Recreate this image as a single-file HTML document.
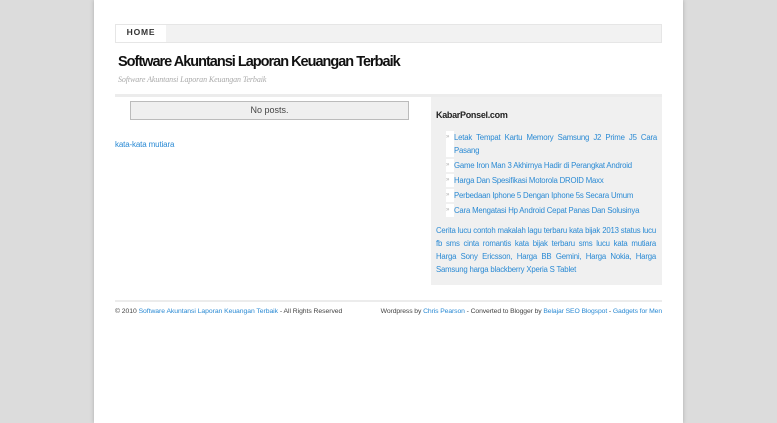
<!DOCTYPE html>
<html><head><style>
body{margin:0;background:#dcdcdc;font-family:"Liberation Sans",sans-serif;}
#page{position:absolute;left:94px;top:0;width:589px;height:423px;background:#fff;box-shadow:0 0 4px #aaa;}
a{color:#2a8ad4;text-decoration:none}
.abs{position:absolute}
.li{margin-bottom:2px;display:flex}
.li span{color:#aaa;background:#fff;width:8px;flex:none;font-size:6px}
</style></head><body>
<div id="page">
<div class="abs" style="left:21px;top:24px;width:545px;height:17px;background:#f2f2f2;border:1px solid #e6e6e6;"></div>
<div class="abs" style="left:22px;top:25px;width:50px;height:17px;background:#fff;font-size:8.5px;font-weight:bold;letter-spacing:.8px;color:#333;text-align:center;line-height:15px;">HOME</div>
<div class="abs" style="left:24px;top:54px;font-size:14.5px;font-weight:bold;letter-spacing:-1px;color:#111;">Software Akuntansi Laporan Keuangan Terbaik</div>
<div class="abs" style="left:24px;top:75px;font-family:'Liberation Serif',serif;font-style:italic;font-size:8px;letter-spacing:-.1px;color:#aaa;">Software Akuntansi Laporan Keuangan Terbaik</div>
<div class="abs" style="left:21px;top:94px;width:547px;height:3px;background:#ececec;"></div>
<div class="abs" style="left:337px;top:97px;width:231px;height:188px;background:#f0f0f0;"></div>
<div class="abs" style="left:36px;top:101px;width:277px;height:17px;background:#efefef;border:1px solid #bbb;font-size:9px;color:#444;text-align:center;line-height:17px;">No posts.</div>
<div class="abs" style="left:21px;top:140px;font-size:8px;letter-spacing:-.15px"><a>kata-kata mutiara</a></div>
<div class="abs" style="left:342px;top:110px;font-size:9px;font-weight:bold;letter-spacing:-.3px;color:#222;">KabarPonsel.com</div>
<div class="abs" style="left:352px;top:131px;width:211px;font-size:7.8px;letter-spacing:-.2px;line-height:13px;">
<div class="li"><span>»</span><a style="text-align:justify">Letak Tempat Kartu Memory Samsung J2 Prime J5 Cara Pasang</a></div>
<div class="li"><span>»</span><a>Game Iron Man 3 Akhirnya Hadir di Perangkat Android</a></div>
<div class="li"><span>»</span><a>Harga Dan Spesifikasi Motorola DROID Maxx</a></div>
<div class="li"><span>»</span><a>Perbedaan Iphone 5 Dengan Iphone 5s Secara Umum</a></div>
<div class="li"><span>»</span><a>Cara Mengatasi Hp Android Cepat Panas Dan Solusinya</a></div>
</div>
<div class="abs" style="left:342px;top:224px;width:220px;font-size:7.8px;letter-spacing:-.2px;line-height:13px;text-align:justify;color:#2a8ad4;">Cerita lucu contoh makalah lagu terbaru kata bijak 2013 status lucu fb sms cinta romantis kata bijak terbaru sms lucu kata mutiara Harga Sony Ericsson, Harga BB Gemini, Harga Nokia, Harga Samsung harga blackberry Xperia S Tablet</div>
<div class="abs" style="left:21px;top:300px;width:547px;height:2px;background:#ececec;"></div>
<div class="abs" style="left:21px;top:308px;font-size:6.8px;letter-spacing:-.05px;color:#444;white-space:nowrap;">© 2010 <a>Software Akuntansi Laporan Keuangan Terbaik</a> - All Rights Reserved</div>
<div class="abs" style="right:21px;top:308px;font-size:6.8px;letter-spacing:-.1px;color:#444;white-space:nowrap;">Wordpress by <a>Chris Pearson</a> - Converted to Blogger by <a>Belajar SEO Blogspot</a> - <a>Gadgets for Men</a></div>
</div>
</body></html>
